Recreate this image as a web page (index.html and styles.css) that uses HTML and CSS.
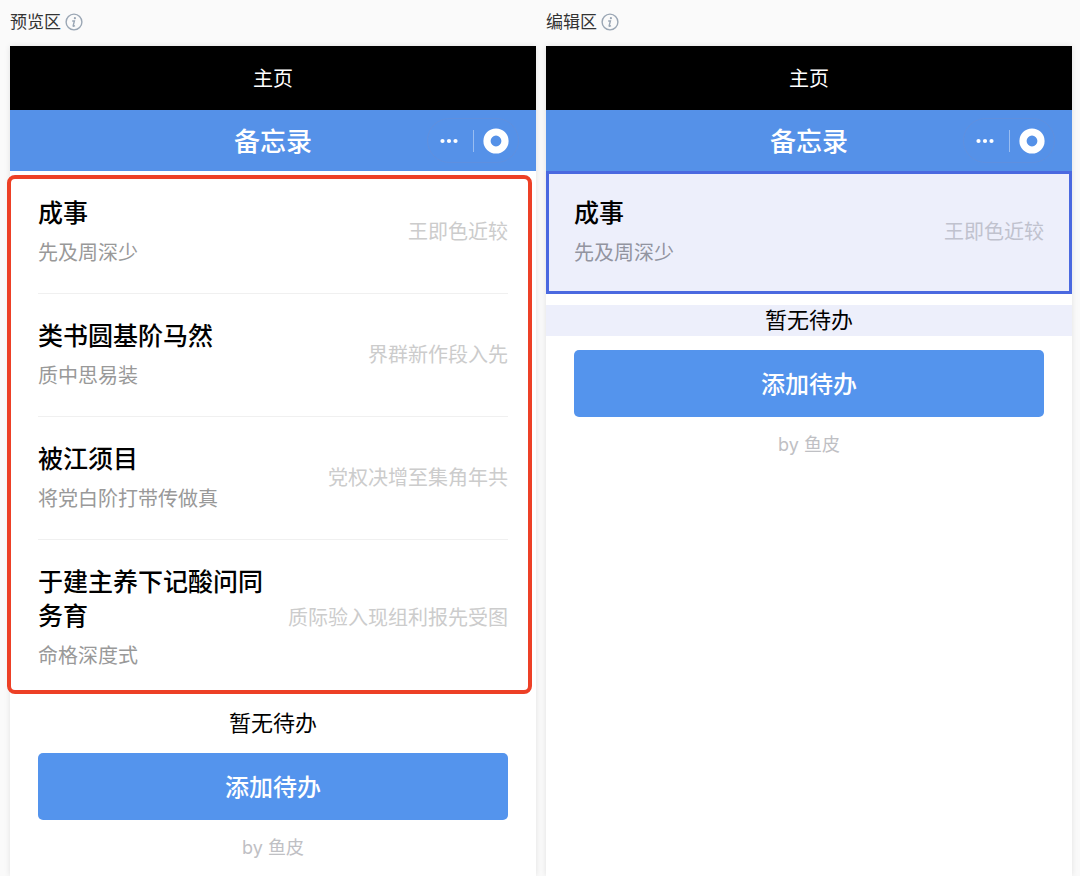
FILE: index.html
```
<!DOCTYPE html>
<html lang="zh-CN">
<head>
  <meta charset="UTF-8" />
  <meta name="viewport" content="width=device-width, initial-scale=1.0"/>
  <title>备忘录</title>
  <link rel="stylesheet" href="styles.css">
</head>
<body>

  <div class="workspace">
    <!-- Preview -->
    <section class="pane">
      <h2 class="pane-title">
        预览区
        <svg class="info-icon" viewBox="0 0 18 18" aria-hidden="true">
          <circle cx="9" cy="9" r="7.9"/>
          <circle class="dot" cx="9.9" cy="5.2" r="1.1"/>
          <path d="M7.2 8h2.2l-1.2 4.6q-.2.9.6.6l1.2-.6"/>
        </svg>
      </h2>
      <div class="phone">
        <div class="page-bar">主页</div>
        <header class="nav-bar">
          <h1>备忘录</h1>
          <div class="capsule">
            <button type="button" aria-label="更多">
              <svg width="20" height="6" viewBox="0 0 20 6"><circle cx="2.5" cy="3" r="2.1"/><circle cx="9" cy="3" r="2.1"/><circle cx="15.5" cy="3" r="2.1"/></svg>
            </button>
            <span class="divider"></span>
            <button type="button" aria-label="关闭">
              <svg width="26" height="26" viewBox="0 0 26 26"><circle class="ring" cx="13" cy="13" r="9"/></svg>
            </button>
          </div>
        </header>
        <div class="list-wrap">
          <ul class="memo-list">
            <li class="memo">
              <div class="memo-main">
                <h3>成事</h3>
                <p>先及周深少</p>
              </div>
              <span class="memo-value">王即色近较</span>
            </li>
            <li class="memo">
              <div class="memo-main">
                <h3>类书圆基阶马然</h3>
                <p>质中思易装</p>
              </div>
              <span class="memo-value">界群新作段入先</span>
            </li>
            <li class="memo">
              <div class="memo-main">
                <h3>被江须目</h3>
                <p>将党白阶打带传做真</p>
              </div>
              <span class="memo-value">党权决增至集角年共</span>
            </li>
            <li class="memo">
              <div class="memo-main">
                <h3>于建主养下记酸问同务育</h3>
                <p>命格深度式</p>
              </div>
              <span class="memo-value">质际验入现组利报先受图</span>
            </li>
          </ul>
          <div class="marker"></div>
        </div>
        <p class="empty">暂无待办</p>
        <button type="button" class="btn-add">添加待办</button>
        <p class="author">by 鱼皮</p>
      </div>
    </section>

    <!-- Editor -->
    <section class="pane">
      <h2 class="pane-title">
        编辑区
        <svg class="info-icon" viewBox="0 0 18 18" aria-hidden="true">
          <circle cx="9" cy="9" r="7.9"/>
          <circle class="dot" cx="9.9" cy="5.2" r="1.1"/>
          <path d="M7.2 8h2.2l-1.2 4.6q-.2.9.6.6l1.2-.6"/>
        </svg>
      </h2>
      <div class="phone">
        <div class="page-bar">主页</div>
        <header class="nav-bar">
          <h1>备忘录</h1>
          <div class="capsule">
            <button type="button" aria-label="更多">
              <svg width="20" height="6" viewBox="0 0 20 6"><circle cx="2.5" cy="3" r="2.1"/><circle cx="9" cy="3" r="2.1"/><circle cx="15.5" cy="3" r="2.1"/></svg>
            </button>
            <span class="divider"></span>
            <button type="button" aria-label="关闭">
              <svg width="26" height="26" viewBox="0 0 26 26"><circle class="ring" cx="13" cy="13" r="9"/></svg>
            </button>
          </div>
        </header>
        <ul class="memo-list selected">
          <li class="memo">
            <div class="memo-main">
              <h3>成事</h3>
              <p>先及周深少</p>
            </div>
            <span class="memo-value">王即色近较</span>
          </li>
        </ul>
        <p class="empty editable">暂无待办</p>
        <button type="button" class="btn-add">添加待办</button>
        <p class="author">by 鱼皮</p>
      </div>
    </section>
  </div>

</body>
</html>
```
FILE: styles.css
```
:root {
  --primary: #5591e8;
  --button: #5494ed;
  --select: #4b69e0;
  --select-bg: #edeffb;
  --marker: #ed4026;
  --bg: #fafafa;
}

* {
  box-sizing: border-box;
}

body {
  margin: 0;
  background-color: var(--bg);
  color: #000;
  font-family: Inter, "Noto Sans CJK SC", sans-serif;
}

h1,
h2,
h3,
p,
ul {
  margin: 0;
  padding: 0;
  font-weight: 400;
}

button {
  border: none;
  padding: 0;
  font-family: inherit;
  cursor: pointer;
}

.workspace {
  display: flex;
  gap: 10px;
  min-height: 100vh;
  padding: 0 8px 0 10px;
}

.pane {
  flex: 1;
  min-width: 0;
  display: flex;
  flex-direction: column;
}

.pane-title {
  display: flex;
  align-items: center;
  gap: 4px;
  height: 46px;
  padding-bottom: 3px;
  font-size: 17px;
  line-height: 24px;
  color: #333;
}

.info-icon {
  width: 18px;
  height: 18px;
  fill: none;
  stroke: #9aa6b4;
  stroke-width: 1.4;
}

.info-icon .dot {
  fill: #9aa6b4;
  stroke: none;
}

.phone {
  flex: 1;
  background-color: #fff;
  box-shadow: 0 0 6px rgba(0,0,0,0.1);
}

.page-bar {
  height: 64px;
  background-color: #000;
  color: #fff;
  font-size: 20px;
  line-height: 66px;
  text-align: center;
}

.nav-bar {
  display: grid;
  grid-template-columns: 1fr auto 1fr;
  align-items: center;
  height: 61px;
  padding: 0 17px;
  background-color: var(--primary);
  color: #fff;
}

.nav-bar h1 {
  grid-column: 2;
  padding-bottom: 2px;
  font-size: 26px;
  font-weight: 500;
}

.capsule {
  justify-self: end;
  display: flex;
  align-items: center;
  width: 92px;
  height: 45px;
  border: 1px solid rgba(120,140,200,0.3);
  border-radius: 23px;
}

.capsule button {
  flex: 1;
  display: flex;
  justify-content: center;
  align-items: center;
  height: 100%;
  background: none;
}

.capsule svg {
  fill: #fff;
}

.capsule .ring {
  fill: none;
  stroke: #fff;
  stroke-width: 7.2;
}

.divider {
  width: 1px;
  height: 22px;
  background-color: rgba(255,255,255,0.4);
}

.list-wrap {
  position: relative;
}

/* red frame drawn over the whole list */
.marker {
  position: absolute;
  top: 4px;
  right: 4px;
  bottom: 3px;
  left: -3px;
  border: 4px solid var(--marker);
  border-radius: 8px;
  pointer-events: none;
}

.memo-list {
  padding: 0 28px;
  list-style: none;
}

.memo {
  display: flex;
  justify-content: space-between;
  align-items: center;
  gap: 10px;
  padding: 25px 0;
  border-bottom: 1px solid #f0f0f0;
}

.memo:last-child {
  border-bottom-color: transparent;
}

.memo-main {
  flex: 1;
}

.memo h3 {
  font-size: 25px;
  font-weight: 500;
  line-height: 34px;
}

.memo p {
  margin-top: 8px;
  font-size: 20px;
  line-height: 30px;
  color: #999;
}

.memo-value {
  font-size: 20px;
  line-height: 30px;
  color: #ccc;
}

.selected {
  background-color: var(--select-bg);
  outline: 3px solid var(--select);
  outline-offset: -3px;
}

.selected .memo p {
  color: #9294a0;
}

.selected .memo-value {
  color: #c0c2ce;
}

.empty {
  margin: 11px 0 14px;
  font-size: 22px;
  line-height: 31px;
  text-align: center;
}

.editable {
  background-color: var(--select-bg);
}

.btn-add {
  display: block;
  width: calc(100% - 56px);
  height: 67px;
  margin: 0 28px;
  padding-bottom: 3px;
  border-radius: 5px;
  background-color: var(--button);
  color: #fff;
  font-size: 24px;
  font-weight: 500;
}

.author {
  margin-top: 14px;
  font-size: 18px;
  line-height: 27px;
  text-align: center;
  color: #bfc0c4;
}
```
